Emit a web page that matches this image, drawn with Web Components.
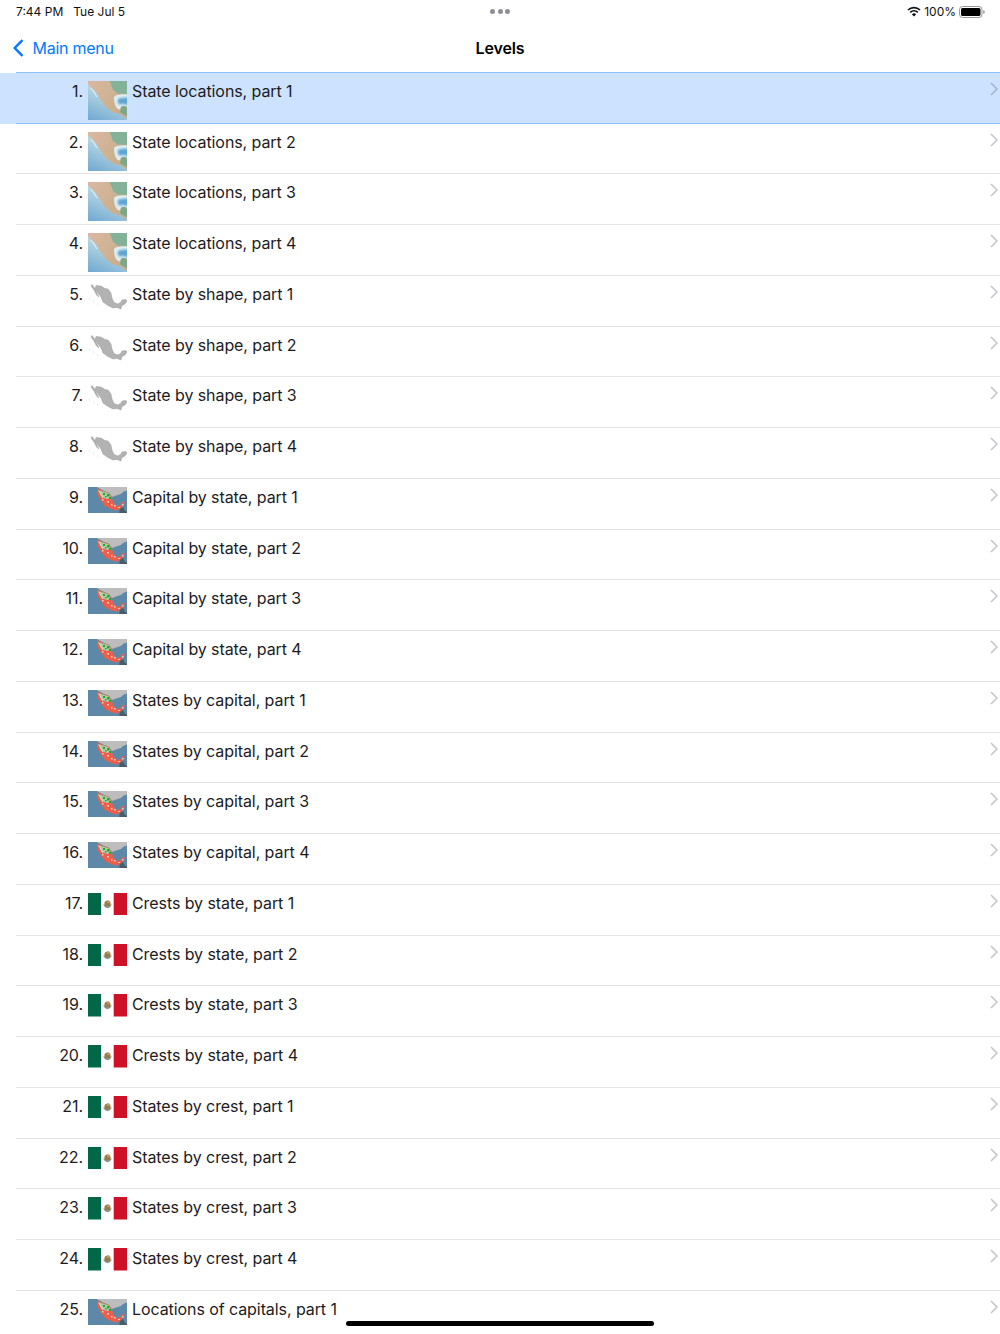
<!DOCTYPE html>
<html>
<head>
<meta charset="utf-8">
<title>Levels</title>
<style>
html, body {
    margin: 0;
    padding: 0;
    height: 100%;
    overflow: hidden;
    background-color: #fff;
    font-family: Inter, "Liberation Sans", sans-serif;
    color: #000;
}
</style>
</head>
<body>
<app-screen></app-screen>

<script>
const statusTemplate = document.createElement("template");
statusTemplate.innerHTML = `
<style>
:host {
    display: grid;
    grid-template-columns: 1fr auto 1fr;
    align-items: center;
    box-sizing: border-box;
    height: 24px;
    padding: 0 15px 1px 16px;
    font-size: 12px;
    color: #111;
}
#left {
    display: flex;
    gap: 10px;
}
#dots {
    display: flex;
    gap: 2.5px;
    margin-left: -1px;
}
#dots span {
    width: 5px;
    height: 5px;
    border-radius: 50%;
    background-color: #8e8e93;
}
#right {
    display: flex;
    justify-content: flex-end;
    align-items: center;
    gap: 3px;
}
svg {
    display: block;
}
</style>
<div id="left"><span>7:44 PM</span><span>Tue Jul 5</span></div>
<div id="dots"><span></span><span></span><span></span></div>
<div id="right">
    <svg width="14" height="11" viewBox="0 0 14 11">
        <path d="M1 4 A8.6 8.6 0 0 1 13 4" fill="none" stroke="#111" stroke-width="1.7"/>
        <path d="M3.2 6.3 A5.4 5.4 0 0 1 10.8 6.3" fill="none" stroke="#111" stroke-width="1.7"/>
        <path d="M7 10.6 L4.9 8.4 A3 3 0 0 1 9.1 8.4 Z" fill="#111"/>
    </svg>
    <span>100%</span>
    <svg width="26" height="12" viewBox="0 0 26 12">
        <rect x="0.5" y="0.5" width="22.5" height="11" rx="3" fill="none" stroke="#999"/>
        <rect x="2" y="2" width="19.5" height="8" rx="1.6" fill="#000"/>
        <path d="M24.2 4.2 a1.6 1.8 0 0 1 0 3.6 Z" fill="#999"/>
    </svg>
</div>
`;

class StatusBar extends HTMLElement {
    constructor() {
        super();
        this.attachShadow({mode: "open"});
        this.shadowRoot.appendChild(statusTemplate.content.cloneNode(true));
    }
}

const navTemplate = document.createElement("template");
navTemplate.innerHTML = `
<style>
:host {
    display: grid;
    grid-template-columns: 1fr auto 1fr;
    align-items: center;
    height: 48px;
    padding: 0 13px;
    font-size: 16px;
    letter-spacing: -0.12px;
}
#back {
    display: flex;
    align-items: center;
    gap: 8.5px;
    color: #007aff;
    letter-spacing: -0.25px;
}
#title {
    font-weight: 600;
}
svg {
    display: block;
}
</style>
<div id="back">
    <svg width="11" height="18" viewBox="0 0 11 18">
        <path d="M9.5 1.2 L1.7 9 L9.5 16.8" fill="none" stroke="#007aff" stroke-width="2.4"/>
    </svg>
    <slot name="back"></slot>
</div>
<div id="title"><slot></slot></div>
<div></div>
`;

class NavBar extends HTMLElement {
    constructor() {
        super();
        this.attachShadow({mode: "open"});
        this.shadowRoot.appendChild(navTemplate.content.cloneNode(true));
    }
}

// the four thumbnails, small hand drawn versions of the pictures in the app
const iconArt = {
    map: `
    <svg width="39" height="39" viewBox="0 0 39 39">
        <defs>
            <linearGradient id="sea" x1="0.3" y1="0.3" x2="0" y2="1">
                <stop offset="0" stop-color="#b4d4e2"/>
                <stop offset="1" stop-color="#6fa8d2"/>
            </linearGradient>
            <linearGradient id="land" x1="0" y1="0" x2="1" y2="0.6">
                <stop offset="0" stop-color="#dcb8a4"/>
                <stop offset="1" stop-color="#c6ae88"/>
            </linearGradient>
            <filter id="soft"><feGaussianBlur stdDeviation="0.5"/></filter>
            <filter id="softer"><feGaussianBlur stdDeviation="1"/></filter>
            <clipPath id="box"><rect width="39" height="39"/></clipPath>
        </defs>
        <g clip-path="url(#box)">
            <rect width="39" height="39" fill="url(#sea)"/>
            <g filter="url(#soft)">
                <path d="M-2 -2 H41 V39 L33 33.5 L24 31 L16 24 L8 11 L1 4 L-2 3 Z" fill="url(#land)"/>
                <path d="M21 -2 H41 V13 L30 12.5 L25 9 Z" fill="#84b299"/>
                <path d="M26 16 Q28 12.5 41 13.5 V27 Q37 24 34 25 Q32 26 32 28.5 Q26 28 26 16 Z" fill="#dceef3"/>
            </g>
            <path d="M30 18 Q33 16 41 16.5 V25 Q36 22 32 23.5 Q29 23 30 18 Z" fill="#5fa5d4" filter="url(#softer)"/>
            <path d="M32 31 L33.5 25.5 L36.5 25 L41 28.5 V36 L34 32.5 Z" fill="#7ba888" filter="url(#soft)"/>
            <path d="M3 7 L6 11 L9 16" fill="none" stroke="#eef6f8" stroke-width="0.9"/>
        </g>
    </svg>`,
    shape: `
    <svg width="39" height="26" viewBox="0 0 39 26">
        <path d="M8 1.5 L13 2 L17 4.5 L20 5 L23 9 L24 14 L26 18.5 L30 20 L33 18 L34 16 L38 15.5 L39 17 L37 20 L34 21.5 L33 25 L29 23.5 L25 24 L20 21.5 L15 18 L13 13 L10 9 L7 5 Z" fill="#b2b2b2" stroke="#8f8f8f" stroke-width="0.4"/>
        <path d="M4 0.5 L6 3 L8 7 L10 11 L11 13 L8.5 11 L6 6 L3 2 Z" fill="#b2b2b2" stroke="#8f8f8f" stroke-width="0.4"/>
        <path d="M1 15 h1 M5 17 h1 M9 20 h1" stroke="#d5d5d5" stroke-width="0.8"/>
    </svg>`,
    capital: `
    <svg width="39" height="26" viewBox="0 0 39 26">
        <defs>
            <filter id="soft"><feGaussianBlur stdDeviation="0.3"/></filter>
            <clipPath id="box"><rect width="39" height="26"/></clipPath>
        </defs>
        <g clip-path="url(#box)"><g filter="url(#soft)">
            <rect x="-1" y="-1" width="41" height="28" fill="#5d88a8"/>
            <path d="M7 -1 H40 V3 L35 5 L33 7 L28 8.5 L24 10 L21 6 L15 3.5 Z" fill="#bdbdbd"/>
            <path d="M9 1 L15 4 L21 6 L24 11 L25 15 L29 19 L33 18 L33.5 15.5 L37 15 L35 19 L32 22 L28 23.5 L23 22 L17 19 L12 12 L9 7 Z" fill="#ee5f4b"/>
            <path d="M10 3 L15 4.5 L21 6.5 L23 11 L19 12 L14 10 Z" fill="#a9cfa0"/>
            <path d="M15 6 h2 v2 h-2 Z M19 7 h2.5 v2.5 h-2.5 Z M21 10 h2 v2 h-2 Z M17 9 h1.5 v1.5 h-1.5 Z" fill="#2e9e3a"/>
            <path d="M19 14 h2 v1.5 h-2 Z M26 18 h1.5 v1.5 h-1.5 Z M30 20 h2 v1 h-2 Z M23 17 h1.5 v1.5 h-1.5 Z M14 12 h1.5 v1.5 h-1.5 Z M34 17 h1.5 v1.5 h-1.5 Z" fill="#f7cfc2"/>
            <path d="M32 22 L35 20 L37 24 L40 25 V27 H31 Z" fill="#4c5b66"/>
            <path d="M11 4 L13 8 L15 11" fill="none" stroke="#d8e4d8" stroke-width="1"/>
        </g></g>
    </svg>`,
    flag: `
    <svg width="39" height="22.5" viewBox="0 0 39 22.5">
        <rect width="13.3" height="22.5" fill="#006847"/>
        <rect x="13.3" width="12.4" height="22.5" fill="#fff"/>
        <rect x="25.7" width="13.3" height="22.5" fill="#ce1126"/>
        <path d="M15.6 11.5 Q19.5 17.8 23.4 11.5" fill="none" stroke="#8fae8c" stroke-width="1.4"/>
        <ellipse cx="19.5" cy="11" rx="3.1" ry="3.6" fill="#9a7a4a"/>
        <circle cx="20.3" cy="8.8" r="1.5" fill="#c29a5c"/>
        <path d="M17.5 13.8 h4" stroke="#7d9cb0" stroke-width="1"/>
    </svg>`
};

const rowTemplate = document.createElement("template");
rowTemplate.innerHTML = `
<style>
:host {
    display: block;
    box-sizing: border-box;
    height: 50.75px;
    font-size: 16px;
    letter-spacing: -0.08px;
    color: #1c1c1e;
}
:host([selected]) {
    background-color: #cce2ff;
}
#line {
    display: flex;
    box-sizing: border-box;
    height: 100%;
    margin-left: 16px;
    padding: 8px 2px 0 0;
    border-bottom: 1px solid #e3e3e5;
}
:host([selected]) #line {
    border-bottom-color: #8ec1fb;
}
#number {
    width: 67px;
    text-align: right;
    line-height: 20px;
    flex: none;
}
#icon {
    width: 39px;
    flex: none;
    margin-left: 5px;
}
#icon svg {
    display: block;
}
#name {
    flex: 1;
    margin-left: 5px;
    line-height: 20px;
}
#chevron {
    display: block;
    flex: none;
    margin-top: 1px;
}
:host([selected]) #chevron path {
    stroke: #a3b3c8;
}
</style>
<div id="line">
    <span id="number"></span>
    <span id="icon"></span>
    <span id="name"><slot></slot></span>
    <svg id="chevron" width="8" height="14" viewBox="0 0 8 14">
        <path d="M1 1 L7 7 L1 13" fill="none" stroke="#c4c4c8" stroke-width="1.5"/>
    </svg>
</div>
`;

class LevelRow extends HTMLElement {
    constructor() {
        super();
        this.attachShadow({mode: "open"});
        this.shadowRoot.appendChild(rowTemplate.content.cloneNode(true));
    }

    connectedCallback() {
        this.shadowRoot.querySelector('#number').textContent = this.getAttribute('number') + '.';
        this.shadowRoot.querySelector('#icon').innerHTML = iconArt[this.getAttribute('icon')];
    }
}

const levels = [
    ['map', 'State locations, part 1'], ['map', 'State locations, part 2'],
    ['map', 'State locations, part 3'], ['map', 'State locations, part 4'],
    ['shape', 'State by shape, part 1'], ['shape', 'State by shape, part 2'],
    ['shape', 'State by shape, part 3'], ['shape', 'State by shape, part 4'],
    ['capital', 'Capital by state, part 1'], ['capital', 'Capital by state, part 2'],
    ['capital', 'Capital by state, part 3'], ['capital', 'Capital by state, part 4'],
    ['capital', 'States by capital, part 1'], ['capital', 'States by capital, part 2'],
    ['capital', 'States by capital, part 3'], ['capital', 'States by capital, part 4'],
    ['flag', 'Crests by state, part 1'], ['flag', 'Crests by state, part 2'],
    ['flag', 'Crests by state, part 3'], ['flag', 'Crests by state, part 4'],
    ['flag', 'States by crest, part 1'], ['flag', 'States by crest, part 2'],
    ['flag', 'States by crest, part 3'], ['flag', 'States by crest, part 4'],
    ['capital', 'Locations of capitals, part 1']
];

const screenTemplate = document.createElement("template");
screenTemplate.innerHTML = `
<style>
:host {
    display: block;
    position: relative;
    height: 1334px;
    overflow: hidden;
}
#topRule {
    height: 0.75px;
    margin-left: 16px;
    background-color: #8ec1fb;
}
#home {
    position: absolute;
    left: 346px;
    bottom: 8px;
    width: 308px;
    height: 5px;
    border-radius: 3px;
    background-color: #000;
}
</style>
<status-bar></status-bar>
<nav-bar><span slot="back">Main menu</span>Levels</nav-bar>
<div id="topRule"></div>
<div id="list"></div>
<div id="home"></div>
`;

class AppScreen extends HTMLElement {
    constructor() {
        super();
        this.attachShadow({mode: "open"});
        this.shadowRoot.appendChild(screenTemplate.content.cloneNode(true));
    }

    connectedCallback() {
        const list = this.shadowRoot.querySelector('#list');
        levels.forEach((level, i) => {
            const row = document.createElement('level-row');
            row.setAttribute('number', i + 1);
            row.setAttribute('icon', level[0]);
            row.textContent = level[1];
            if(i === 0) {
                row.setAttribute('selected', '');
            }
            list.appendChild(row);
        });
    }
}

customElements.define("status-bar", StatusBar);
customElements.define("nav-bar", NavBar);
customElements.define("level-row", LevelRow);
customElements.define("app-screen", AppScreen);
</script>
</body>
</html>
